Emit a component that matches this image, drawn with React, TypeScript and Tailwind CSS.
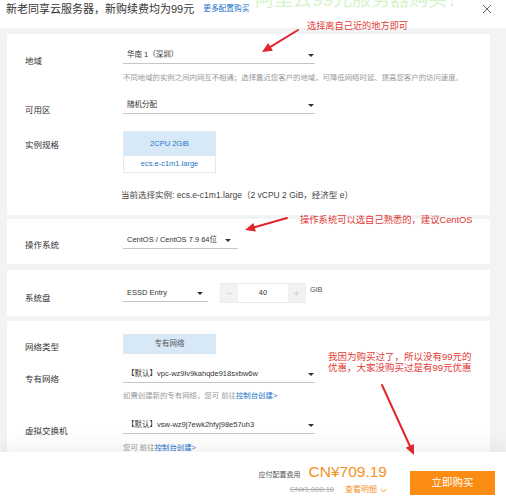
import React from 'react';

const font = { fontFamily: '"Liberation Sans", "Noto Sans CJK SC", sans-serif' };

function Arrow({ x1, y1, x2, y2 }: { x1: number; y1: number; x2: number; y2: number }) {
  const dx = x2 - x1;
  const dy = y2 - y1;
  const len = Math.hypot(dx, dy);
  const ux = dx / len;
  const uy = dy / len;
  const L = 10;
  const W = 4.5;
  const bx = x2 - ux * L;
  const by = y2 - uy * L;
  const pts = `${x2},${y2} ${bx - uy * W},${by + ux * W} ${bx + uy * W},${by - ux * W}`;
  return (
    <g>
      <line x1={x1} y1={y1} x2={bx + ux * 2} y2={by + uy * 2} stroke="#e0262b" strokeWidth={2} strokeLinecap="round" />
      <polygon points={pts} fill="#e0262b" />
    </g>
  );
}

function Caret() {
  return <span className="w-0 h-0 border-l-[3px] border-r-[3px] border-t-[3.5px] border-l-transparent border-r-transparent border-t-[#333]" />;
}

function Select({ text, className }: { text: string; className: string }) {
  return (
    <div className={`h-[17px] border-b border-[#c6c6c6] flex items-center justify-between pl-[4px] text-[7.5px] text-[#333] ${className}`}>
      <span>{text}</span>
      <Caret />
    </div>
  );
}

function Label({ children, pt }: { children: React.ReactNode; pt: string }) {
  return <div className={`w-[98px] shrink-0 text-[8.5px] leading-[12px] text-[#333] ${pt}`}>{children}</div>;
}

export default function App() {
  return (
    <div className="relative w-[506px] h-[500px] overflow-hidden bg-[#f2f3f5] flex flex-col" style={font}>
      {/* header */}
      <div className="h-[28px] shrink-0 bg-white flex items-start pt-[3px] pl-[6px] pr-[14px]">
        <span className="text-[11px] leading-[12px] text-[#333]">新老同享云服务器，新购续费均为99元</span>
        <span className="ml-[9px] text-[7.7px] leading-[12px] text-[#1a73c9]">更多配置购买</span>
        <svg className="ml-auto mt-[1px]" width="10" height="10" viewBox="0 0 10 10">
          <path d="M1 1L9 9M9 1L1 9" stroke="#666" strokeWidth="1" />
        </svg>
      </div>

      {/* content */}
      <div className="flex-1 overflow-hidden pt-[6px] pl-[7px] pr-[16px] flex flex-col">
        {/* card 1 */}
        <div className="bg-white pt-[13px] pb-[14px] pl-[18px]">
          <div className="flex">
            <Label pt="pt-[8px]">地域</Label>
            <div>
              <Select text="华南 1（深圳）" className="w-[192px] pr-[1px]" />
              <div className="mt-[8px] text-[7.4px] leading-[12px] text-[#999] whitespace-nowrap">
                不同地域的实例之间内网互不相通；选择靠近您客户的地域，可降低网络时延、提高您客户的访问速度。
              </div>
            </div>
          </div>
          <div className="flex mt-[13px]">
            <Label pt="pt-[7px]">可用区</Label>
            <Select text="随机分配" className="w-[192px] pr-[1px]" />
          </div>
          <div className="flex mt-[15px]">
            <Label pt="pt-[8px]">实例规格</Label>
            <div className="w-[93px] border border-[#e3e8ee] flex flex-col text-[7.5px]">
              <div className="h-[24px] bg-[#d7e8f7] text-[#2a78c8] flex items-center justify-center">2CPU 2GiB</div>
              <div className="h-[16px] bg-white text-[#2a78c8] flex items-center justify-center">ecs.e-c1m1.large</div>
            </div>
          </div>
          <div className="mt-[16px] ml-[96px] text-[8.5px] leading-[12px] text-[#444] whitespace-nowrap">
            当前选择实例: ecs.e-c1m1.large（2 vCPU 2 GiB，经济型 e）
          </div>
        </div>

        {/* card 2 */}
        <div className="bg-white mt-[4px] pt-[13px] pb-[13px] pl-[18px] flex">
          <Label pt="pt-[7px]">操作系统</Label>
          <Select text="CentOS / CentOS 7.9 64位" className="w-[115px] pr-[7px]" />
        </div>

        {/* card 3 */}
        <div className="bg-white mt-[6px] pt-[13px] pb-[12px] pl-[18px] flex">
          <Label pt="pt-[9px]">系统盘</Label>
          <Select text="ESSD Entry" className="w-[85px] pr-[5px] mt-[2px]" />
          <div className="ml-[12px] h-[20px] w-[86px] flex border border-[#ececec] text-[#333]">
            <div className="w-[17px] bg-[#f2f2f2] flex items-center justify-center text-[#d0d0d0] text-[10px]">−</div>
            <div className="flex-1 bg-white flex items-center justify-center text-[7.5px]">40</div>
            <div className="w-[17px] bg-[#f2f2f2] flex items-center justify-center text-[#d0d0d0] text-[10px]">+</div>
          </div>
          <span className="ml-[4px] text-[7.5px] leading-[12px] pt-[1px] text-[#555]">GiB</span>
        </div>

        {/* card 4 */}
        <div className="bg-white mt-[5px] pt-[13px] pl-[18px] flex-1">
          <div className="flex">
            <Label pt="pt-[7px]">网络类型</Label>
            <div className="w-[93px] h-[20px] bg-[#d7e8f7] flex items-center justify-center text-[7.5px] text-[#555]">专有网络</div>
          </div>
          <div className="flex mt-[12px]">
            <Label pt="pt-[7px]">专有网络</Label>
            <div>
              <Select text="【默认】vpc-wz9lv9kahqde918sxbw6w" className="w-[192px] pr-[1px]" />
              <div className="mt-[7px] text-[7.4px] leading-[12px] text-[#999]">
                如需创建新的专有网络，您可 前往<span className="text-[#1a73c9]">控制台创建&gt;</span>
              </div>
            </div>
          </div>
          <div className="flex mt-[15px]">
            <Label pt="pt-[8px]">虚拟交换机</Label>
            <div>
              <Select text="【默认】vsw-wz9j7ewk2hfyj98e57uh3" className="w-[192px] pr-[1px]" />
              <div className="mt-[8px] text-[7.4px] leading-[12px] text-[#999]">
                您可 前往<span className="text-[#1a73c9]">控制台创建&gt;</span>
              </div>
            </div>
          </div>
        </div>
      </div>

      {/* footer */}
      <div className="h-[48px] shrink-0 bg-white flex items-end justify-end pb-[5px] pr-[11px] shadow-[0_-8px_18px_rgba(0,0,0,0.05)] z-10">
        <div className="flex flex-col items-end mr-[23px]">
          <div className="flex items-baseline">
            <span className="text-[7px] text-[#555] mr-[8px]">应付配置费用</span>
            <span className="text-[15.5px] leading-[18px] text-[#f5901f]">CN¥709.19</span>
          </div>
          <div className="flex items-center mt-[4px] leading-[10px]">
            <span className="text-[7.5px] text-[#aaa] line-through">CN¥1,000.10</span>
            <span className="ml-[11px] text-[8px] text-[#f5901f]">查看明细</span>
            <svg className="ml-[3px]" width="7" height="5" viewBox="0 0 7 5">
              <path d="M0.5 0.8L3.5 4L6.5 0.8" stroke="#f5901f" strokeWidth="0.9" fill="none" />
            </svg>
          </div>
        </div>
        <div className="w-[85px] h-[24px] bg-[#fb8c13] flex items-center justify-center text-white text-[10.5px]">立即购买</div>
      </div>

      {/* overlays: watermark, annotations */}
      <div className="absolute left-[255px] top-[-12px] text-[19px] leading-[24px] text-[#d6f4ca] whitespace-nowrap">
        阿里云99元服务器购买！
      </div>
      <div className="absolute left-[307px] top-[20px] text-[9.2px] leading-[12px] text-[#e23a36] whitespace-nowrap">
        选择离自己近的地方即可
      </div>
      <div className="absolute left-[300px] top-[214px] text-[9.3px] leading-[12px] text-[#e23a36] whitespace-nowrap">
        操作系统可以选自己熟悉的，建议CentOS
      </div>
      <div className="absolute left-[328px] top-[351px] text-[9.5px] leading-[11px] text-[#e23a36] whitespace-nowrap">
        我因为购买过了，所以没有99元的
        <br />
        优惠，大家没购买过是有99元优惠
      </div>
      <svg className="absolute inset-0 pointer-events-none z-20" width="506" height="500">
        <Arrow x1={298} y1={30} x2={262} y2={52} />
        <Arrow x1={287} y1={218} x2={245} y2={230} />
        <Arrow x1={382} y1={385} x2={414} y2={455} />
      </svg>
    </div>
  );
}
